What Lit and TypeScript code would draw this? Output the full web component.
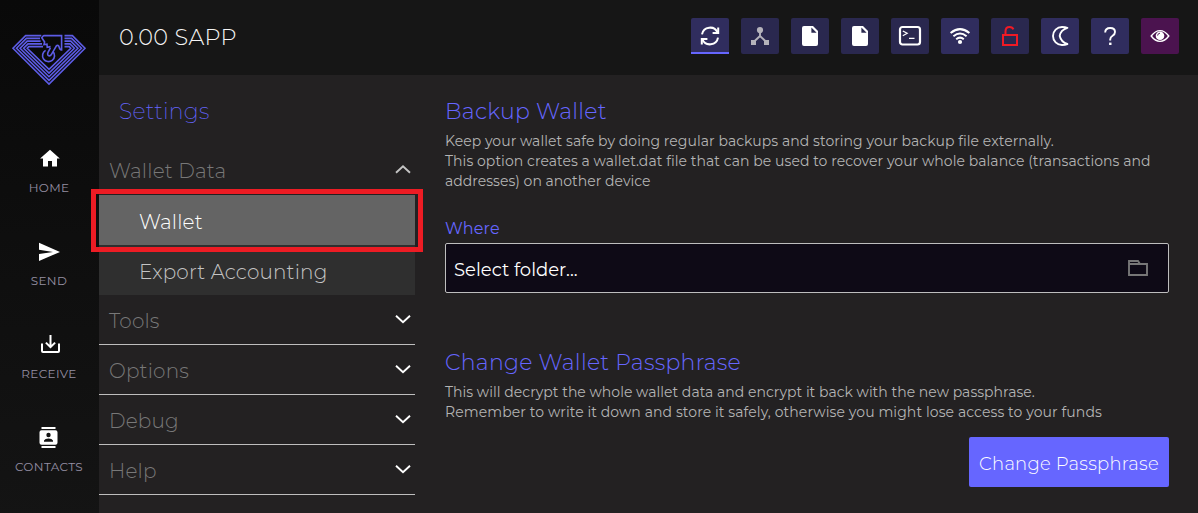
import { LitElement, html, css, svg } from "lit";
import { customElement } from "lit/decorators.js";
import { classMap } from "lit/directives/class-map.js";

const navIcons = {
  home: svg`<path fill="#fff" d="M11 0.8 L1.1 9.6 H4 V17.5 H9 V12 H13 V17.5 H18 V9.6 H20.8 Z"/>`,
  send: svg`<path fill="#fff" d="M0 0.8 L21 9.9 L0 19 V12 L14 9.9 L0 7.8 Z"/>`,
  receive: svg`<g fill="none" stroke="#fff" stroke-width="2"><path d="M3 8.5 V16 Q3 17 4 17 H19 Q20 17 20 16 V8.5"/><path d="M11.5 0 V12 M6.9 7.6 L11.5 12.2 L16.1 7.6"/></g>`,
  contacts: svg`<path fill="#fff" d="M2.5 -1 H16.5 V1 H2.5 Z M2.5 18 H16.5 V20 H2.5 Z M2.5 2.3 H16.5 Q18.5 2.3 18.5 4.3 V14.8 Q18.5 16.7 16.5 16.7 H2.5 Q.5 16.7 .5 14.8 V4.3 Q.5 2.3 2.5 2.3 Z"/><circle cx="9.5" cy="7" r="2.2" fill="#131313"/><path fill="#131313" d="M5 13.8 V12.6 Q6 10.6 9.5 10.6 Q13 10.6 14 12.6 V13.8 Z"/>`,
};

const file = svg`<path fill="#fff" d="M13 8 H22 L27 13 V26 Q27 28 25 28 H13 Q11 28 11 26 V10 Q11 8 13 8 Z"/><path fill="#2a284f" d="M20.4 9.4 L25.6 14.8 H20.4 Z"/>`;

const tools = [
  { kind: "sync", icon: svg`<g fill="none" stroke="#fff" stroke-width="2"><path d="M11 16.4 A8.2 8.2 0 0 1 26.6 14.6"/><path d="M27 19.6 A8.2 8.2 0 0 1 11.4 21.4"/><path d="M27.2 9.6 V15.1 H21.6 M10.8 26.4 V20.9 H16.4"/></g>` },
  { kind: "dim", icon: svg`<g fill="#b5b3bb"><circle cx="19" cy="12" r="3.1"/><rect x="10" y="22" width="5" height="5"/><rect x="23" y="22" width="5" height="5"/></g><path d="M19 14 V18 L12.6 24 M19 18 L25.4 24" fill="none" stroke="#b5b3bb" stroke-width="1.9"/>` },
  { kind: "dim", icon: file },
  { kind: "dim", icon: file },
  { kind: "dim", icon: svg`<rect x="9" y="9" width="20" height="17.5" rx="2.5" fill="none" stroke="#fff" stroke-width="2.2"/><path d="M11.8 13 L16.2 15.3 L11.8 17.8 M18 20.4 H23.5" fill="none" stroke="#fff" stroke-width="1.2"/>` },
  { kind: "", icon: svg`<g fill="none" stroke="#fff" stroke-width="2"><path d="M9.6 15 Q19 7.2 28.4 15"/><path d="M12.4 18.2 Q19 12.8 25.6 18.2"/><path d="M15.2 21.2 Q19 18 22.8 21.2"/></g><circle cx="19" cy="24" r="2.1" fill="#fff"/>` },
  { kind: "dim", icon: svg`<g fill="none" stroke="#f01a25" stroke-width="2"><rect x="12" y="17" width="14" height="10"/><path d="M14.5 17 V13.4 Q14.5 9 18.5 9 Q21.6 9 22.4 11.4"/></g>` },
  { kind: "", icon: svg`<path d="M26.4 9.9 Q24 9 21 9 A9 9 0 0 0 21 27 Q24 27 26.4 26 Q20.2 24.3 18.7 18 Q19.6 12 26.4 9.9 Z" fill="none" stroke="#fff" stroke-width="1.9" stroke-linejoin="round"/>` },
  { kind: "", icon: svg`<path d="M14.2 14.6 Q14.2 10 19.2 10 Q24 10 24 14 Q24 16.2 21.6 17.8 Q19.2 19.4 19.2 21.4 V22.4" fill="none" stroke="#fff" stroke-width="1.9"/><rect x="18.1" y="24.6" width="2.4" height="2.4" fill="#fff"/>` },
  { kind: "eye", icon: svg`<path d="M10.2 18 Q14.2 12.6 19 12.6 Q23.8 12.6 27.8 18 Q23.8 23.4 19 23.4 Q14.2 23.4 10.2 18 Z" fill="none" stroke="#fff" stroke-width="1.4"/><circle cx="19" cy="17.8" r="4.3" fill="#fff"/><path d="M16.6 17.6 A2.5 2.5 0 0 1 19 15.2" fill="none" stroke="#4b134f" stroke-width=".9"/>` },
];

const nav = [
  { label: "HOME", icon: navIcons.home },
  { label: "SEND", icon: navIcons.send },
  { label: "RECEIVE", icon: navIcons.receive },
  { label: "CONTACTS", icon: navIcons.contacts },
];

const leftEnds = [29.3, 28, 28.6, 30, 31];
const rings = leftEnds.map((end, i) => {
  const y = 1.6 + 2.75 * i;
  const left = 13.6 + 0.8 * i;
  const tip = 1 + 3.55 * i;
  return svg`<path d="M${end} ${y} H${left} L${tip} 14.3 L37 ${50 - 3.65 * i} L${74 - tip} 14.3 L${74 - left} ${y} H52.5"/>`;
});

@customElement("app-root")
export class AppRoot extends LitElement {
  static styles = css`
    * { box-sizing: border-box; }
    :host {
      display: grid;
      grid-template-columns: 99px 1fr;
      height: 513px;
      overflow: hidden;
      background: #232122;
      color: #bcbcbc;
      font-family: Montserrat, Inter, sans-serif;
      font-weight: 300;
    }
    svg { display: block; overflow: visible; }
    .side {
      background: linear-gradient(#090909, #141414);
      display: flex;
      flex-direction: column;
      align-items: center;
      padding-top: 34px;
    }
    .logo { margin-bottom: 63px; margin-right: 2px; fill: none; stroke: #5d5ce6; stroke-width: 1.6; }
    .nav { height: 93px; display: flex; flex-direction: column; align-items: center; gap: 10px; font-size: 12px; font-weight: 400; line-height: 16px; letter-spacing: 0.35px; color: #958fa3; }
    .nav span { margin-right: 1px; }
    .main { display: flex; flex-direction: column; min-width: 0; }
    .top { height: 75px; flex: none; background: #161616; display: flex; justify-content: space-between; align-items: flex-start; padding: 18px 19px 0 20px; }
    .balance { font-size: 22.4px; font-weight: 300; line-height: 28px; padding-top: 5px; color: #f4f4f4; letter-spacing: 0.3px; }
    .tools { display: flex; gap: 12px; }
    .tool { width: 38px; height: 36px; border-radius: 2px; background: #302d5e; }
    .tool.dim { background: #2a284f; }
    .tool.sync { border-bottom: 2px solid #6666ff; border-radius: 2px 2px 0 0; }
    .tool.eye { background: #4b134f; }
    .body { display: grid; grid-template-columns: 316px 724px; column-gap: 30px; }
    h1, h2, p { margin: 0; font-weight: inherit; }
    h1 { font-size: 22px; font-weight: 200; line-height: 30px; color: #6666ff; padding: 22px 0 0 20px; height: 70px; letter-spacing: 0.2px; }
    .group { height: 50px; padding: 0 4px 0 10px; display: flex; align-items: center; justify-content: space-between; font-size: 20px; line-height: 30px; color: #787878; letter-spacing: 0.17px; border-bottom: 1px solid #bebebe; }
    .group span { padding-top: 3px; }
    .group.open { border-color: transparent; }
    .sub { background: #2f2f2f; font-size: 20px; letter-spacing: 0.15px; color: #c4c4c4; }
    .item { height: 50px; line-height: 54px; padding-left: 40px; position: relative; }
    .item.on { background: #646464; color: #fff; }
    .mark { position: absolute; inset: -6px -8px -7px -8px; border: 5px solid #ed1c24; z-index: 1; }
    h2 { font-size: 22px; line-height: 30px; color: #6666ff; letter-spacing: 0.26px; }
    .first { padding-top: 22px; }
    .text { font-size: 14px; line-height: 20px; font-weight: 400; letter-spacing: 0.05px; white-space: nowrap; padding-top: 4px; color: #b4b4b4; }
    .tight { letter-spacing: 0.02px; }
    .loose { letter-spacing: 0.09px; }
    .label { font-size: 16px; font-weight: 400; line-height: 20px; color: #6666ff; letter-spacing: 0.2px; padding: 28px 0 4px; }
    .field { height: 50px; border: 1px solid #bebebe; border-radius: 2px; background: #0e0a16; color: #fff; font-size: 18px; font-weight: 400; display: flex; align-items: center; justify-content: space-between; padding: 3px 20px 0 8px; }
    .field svg { margin-bottom: 3px; }
    .second { padding-top: 55px; }
    .button { margin: 15px 0 0 auto; display: block; width: 200px; height: 50px; border: 0; border-radius: 2px; padding: 4px 0 0; background: #6666ff; color: #fff; font: 300 18px Montserrat, Inter, sans-serif; letter-spacing: 0.23px; white-space: nowrap; }
  `;

  private group(label: string, open = false) {
    return html`<div class=${classMap({ group: true, open })}>
      <span>${label}</span>
      <svg width="16" height="10" viewBox="0 0 16 10"><path d=${open ? "M1 7.8 L8 1.3 L15 7.8" : "M1 .8 L8 7.3 L15 .8"} fill="none" stroke=${open ? "#c4c4c4" : "#fff"} stroke-width="1.9"/></svg>
    </div>`;
  }

  render() {
    return html`
      <nav class="side">
        <svg class="logo" width="74" height="52" viewBox="0 0 74 52">
          ${rings}
          <path d="M31.6 1.6 H49.6 V16 Q47.6 16 47.2 13.2 Q46.4 10.6 44.4 11.8 L39.2 20.8 Q37.6 22.8 36 21.2 Q35.2 20 36 18.4 L38.4 13.8 M31.6 1.6 L29.8 3.8 L32.6 8 L32 10.6 L35 10.2 L35.2 13.2 L38.6 12.6"/>
          <path d="M33.6 16.4 A6 6 0 1 0 41 17.6"/>
        </svg>
        ${nav.map((n) => html`<div class="nav"><svg width="21" height="21" viewBox="0 0 21 21">${n.icon}</svg><span>${n.label}</span></div>`)}
      </nav>
      <div class="main">
        <header class="top">
          <div class="balance">0.00 SAPP</div>
          <div class="tools">
            ${tools.map((t) => html`<div class="tool ${t.kind}"><svg width="38" height="36" viewBox="0 0 38 36">${t.icon}</svg></div>`)}
          </div>
        </header>
        <div class="body">
          <section>
            <h1>Settings</h1>
            ${this.group("Wallet Data", true)}
            <div class="sub">
              <div class="item on">Wallet<div class="mark"></div></div>
              <div class="item">Export Accounting</div>
            </div>
            ${["Tools", "Options", "Debug", "Help"].map((l) => this.group(l))}
          </section>
          <section>
            <h2 class="first">Backup Wallet</h2>
            <p class="text">Keep your wallet safe by doing regular backups and storing your backup file externally.<br />This option creates a wallet.dat file that can be used to recover your whole balance (transactions and<br /><span class="tight">addresses) on another device</span></p>
            <div class="label">Where</div>
            <div class="field"><span>Select folder...</span>
              <svg width="20" height="16" viewBox="0 0 20 16"><path d="M1 15 V1 H10 L12 4 H19 V15 Z M1 4 H12" fill="none" stroke="#777" stroke-width="1.9"/></svg>
            </div>
            <h2 class="second">Change Wallet Passphrase</h2>
            <p class="text"><span class="tight">This will decrypt the whole wallet data and encrypt it back with the new passphrase.</span><br /><span class="loose">Remember to write it down and store it safely, otherwise you might lose access to your funds</span></p>
            <button class="button">Change Passphrase</button>
          </section>
        </div>
      </div>
    `;
  }
}
